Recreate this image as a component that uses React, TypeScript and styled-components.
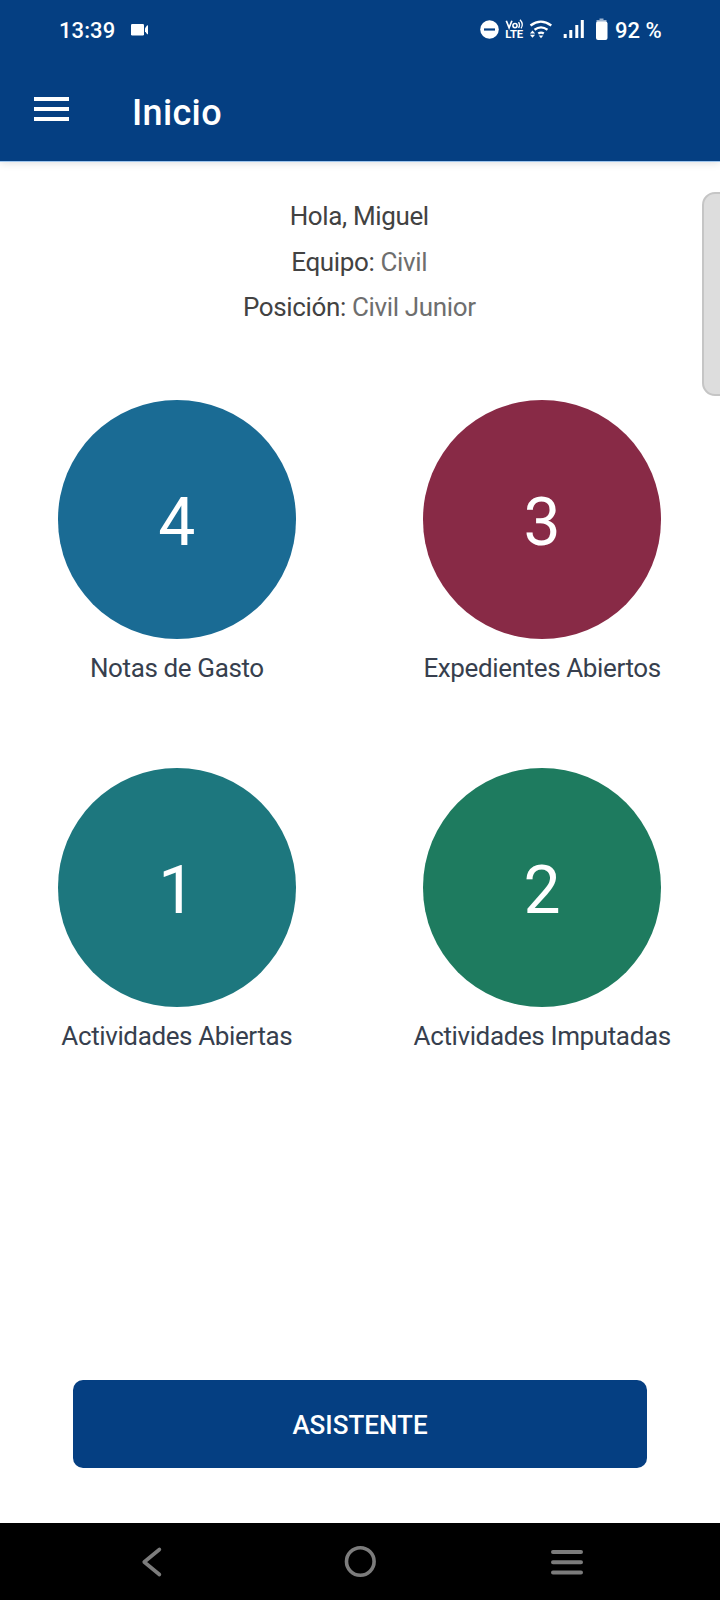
import React from "react";
import styled, { createGlobalStyle } from "styled-components";

const GlobalStyle = createGlobalStyle`
  * { box-sizing: border-box; }
  body { margin: 0; background: #fff; font-family: Roboto, sans-serif; }
`;

const Screen = styled.div`
  position: relative;
  display: flex;
  flex-direction: column;
  width: 720px;
  height: 1600px;
  overflow: hidden;
  background: #fff;
`;

const Header = styled.header`
  height: 161px;
  flex: none;
  background: #053f82;
  color: #fff;
  box-shadow: 0 1px 0 #9fc6ee, 0 2px 8px rgba(0, 0, 0, 0.13);
`;

const StatusBar = styled.div`
  display: flex;
  align-items: center;
  height: 60px;
  padding-left: 59px;
  font-size: 22px;
  font-weight: 500;
  line-height: 60px;
`;

const Clock = styled.span`
  width: 72px;
  padding-top: 1px;
  letter-spacing: 0.1px;
`;

const StatusIcons = styled.svg`
  display: block;
  margin-left: 330px;
`;

const Battery = styled.span`
  margin-left: 7px;
  padding-top: 1px;
  white-space: nowrap;
`;

const AppBar = styled.div`
  display: flex;
  align-items: center;
  height: 101px;
  padding-left: 34px;
`;

const MenuButton = styled.button`
  display: flex;
  flex-direction: column;
  justify-content: space-between;
  width: 35px;
  height: 24px;
  margin: -4px 63px 0 0;
  padding: 0;
  border: 0;
  background: none;
`;

const MenuLine = styled.span`
  height: 4px;
  background: #fff;
`;

const Title = styled.h1`
  margin: 4px 0 0;
  font-size: 36px;
  font-weight: 500;
  line-height: 42px;
  letter-spacing: 0.35px;
`;

const Main = styled.main`
  flex: 1;
  display: flex;
  flex-direction: column;
  align-items: center;
`;

const Greeting = styled.section`
  padding: 33px 1.5px 0 0;
  color: #424242;
  font-size: 26px;
  line-height: 45.7px;
  letter-spacing: -0.36px;
  text-align: center;
`;

const Line = styled.div``;

const Muted = styled.span`
  color: #6e6e6e;
`;

const Grid = styled.section`
  display: grid;
  grid-template-columns: 365.3px 365.3px;
  row-gap: 90px;
  margin: 69px 1px 0 0;
`;

const Card = styled.div`
  display: flex;
  flex-direction: column;
  align-items: center;
  height: 278px;
`;

const Circle = styled.div<{ $color: string }>`
  display: flex;
  align-items: center;
  justify-content: center;
  flex: none;
  width: 238.6px;
  height: 238.6px;
  padding-top: 8px;
  border-radius: 50%;
  background: ${(p) => p.$color};
  color: #fff;
  font-size: 66px;
  line-height: 78px;
`;

const Label = styled.div`
  margin-top: 14.4px;
  color: #373f4e;
  font-size: 26px;
  line-height: 30px;
  letter-spacing: -0.38px;
  white-space: nowrap;
`;

const AssistantButton = styled.button`
  width: 574px;
  height: 88px;
  margin: auto 0 55px;
  padding: 2px 0 0;
  border: 0;
  border-radius: 10px;
  background: #053f82;
  color: #fff;
  font: 500 26px/30px Roboto, sans-serif;
`;

const NavBar = styled.nav`
  display: flex;
  align-items: center;
  flex: none;
  height: 77px;
  padding-left: 141px;
  background: #000;
`;

const NavButton = styled.button<{ $gap?: number }>`
  display: flex;
  margin: 0 0 0 ${(p) => p.$gap ?? 0}px;
  padding: 0;
  border: 0;
  background: none;
`;

const EdgeHandle = styled.div`
  position: absolute;
  top: 192px;
  right: -14px;
  width: 32px;
  height: 204px;
  border: 2px solid #c5c5c5;
  border-radius: 13px;
  background: #ddd;
`;

const stats = [
  { value: 4, label: "Notas de Gasto", color: "#1a6b94" },
  { value: 3, label: "Expedientes Abiertos", color: "#882a46" },
  { value: 1, label: "Actividades Abiertas", color: "#1d777e" },
  { value: 2, label: "Actividades Imputadas", color: "#1e7b5f" },
];

export default function App() {
  return (
    <Screen>
      <GlobalStyle />
      <Header>
        <StatusBar>
          <Clock>13:39</Clock>
          <svg width="18" height="12" viewBox="0 0 18 12" fill="#fff">
            <rect width="13" height="11.5" rx="1.2" />
            <path d="M14 4.2 16 1.5q1-.7 1 .3v8q0 1-1 .2l-2-2.7z" />
          </svg>
          <StatusIcons width="129" height="26" viewBox="0 0 129 26" fill="none" stroke="#fff">
            <circle cx="10.5" cy="12.5" r="9.3" fill="#fff" stroke="none" />
            <path d="M5 12.5h11" stroke="#053f82" strokeWidth="2.2" />
            <path d="m27.3 3.8 2.8 7 2.8-7" strokeWidth="1.7" />
            <circle cx="36" cy="8.6" r="2.1" strokeWidth="1.6" />
            <path d="M39.6 5q1.8 2.8 0 6M41 2.7q4 4.300 1 8.700" strokeWidth="1.3" />
            <text x="26.2" y="21.2" fill="#fff" stroke="none" fontSize="11.3" fontWeight="700" textLength="18">LTE</text>
            <path d="M51.5 8.500q10.300-7.800 20.800 0M55.500 12.700q6.500-4.600 13 0M59.300 16.500q2.800-1.800 5.500 0" strokeWidth="2.3" />
            <path d="m62 21.200-2.300-2.700h4.600zM53.500 13.500l2.600 3h-5.200zM53.500 20.800l2.600-3h-5.200z" fill="#fff" stroke="none" />
            <path d="M86.200 17v4M91.800 13v8M97.800 8v13M103.300 3v18" strokeWidth="3" />
            <path d="M117.500 3h3V1.500h4V3h3v4h-10z" fill="#9eb4d0" stroke="none" />
            <rect x="117" y="4.500" width="11.500" height="18.500" rx="2" fill="#fff" stroke="none" />
          </StatusIcons>
          <Battery>92 %</Battery>
        </StatusBar>
        <AppBar>
          <MenuButton aria-label="Menú">
            <MenuLine />
            <MenuLine />
            <MenuLine />
          </MenuButton>
          <Title>Inicio</Title>
        </AppBar>
      </Header>
      <Main>
        <Greeting>
          <Line>Hola, Miguel</Line>
          <Line>Equipo: <Muted>Civil</Muted></Line>
          <Line>Posición: <Muted>Civil Junior</Muted></Line>
        </Greeting>
        <Grid>
          {stats.map((s) => (
            <Card key={s.label}>
              <Circle $color={s.color}>{s.value}</Circle>
              <Label>{s.label}</Label>
            </Card>
          ))}
        </Grid>
        <AssistantButton>ASISTENTE</AssistantButton>
      </Main>
      <NavBar>
        <NavButton aria-label="Atrás">
          <svg width="21" height="32" viewBox="0 0 21 32" fill="none" stroke="#7c7c7c" strokeWidth="3.6" strokeLinecap="round" strokeLinejoin="round">
            <path d="M18.4 3.5 3.2 16l15.2 12.5" />
          </svg>
        </NavButton>
        <NavButton aria-label="Inicio" $gap={182}>
          <svg width="33" height="33" viewBox="0 0 33 33" fill="none" stroke="#7c7c7c" strokeWidth="3.6">
            <circle cx="16.3" cy="16.5" r="13.8" />
          </svg>
        </NavButton>
        <NavButton aria-label="Recientes" $gap={173}>
          <svg width="34" height="28" viewBox="0 0 34 28" fill="none" stroke="#7c7c7c" strokeWidth="4" strokeLinecap="round">
            <path d="M3 4h28M3 14.3h28M3 24.6h28" />
          </svg>
        </NavButton>
      </NavBar>
      <EdgeHandle />
    </Screen>
  );
}
